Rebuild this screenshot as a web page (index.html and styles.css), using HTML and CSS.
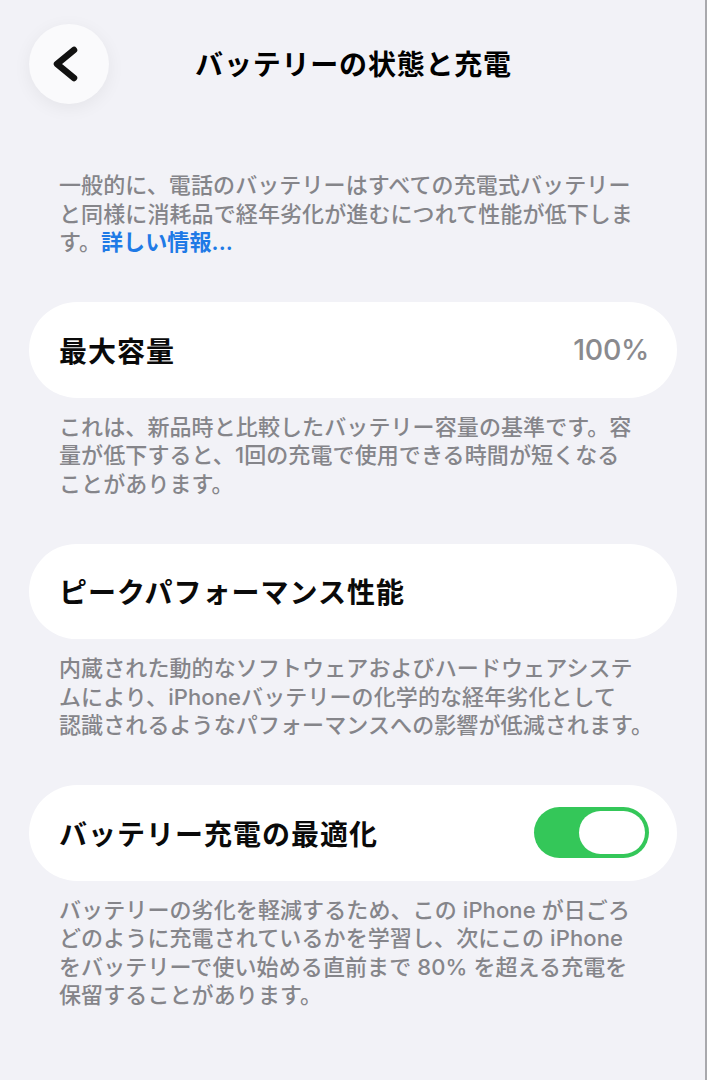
FILE: index.html
```html
<!DOCTYPE html>
<html lang="ja">
<head>
<meta charset="utf-8">
<title>バッテリーの状態と充電</title>
<link rel="stylesheet" href="styles.css">
</head>
<body>
<div class="screen">
  <header class="nav">
    <button class="back" aria-label="戻る">
      <svg viewBox="0 0 80 80" width="80" height="80"><polyline points="45,26 28,40 45,54" fill="none" stroke="#111" stroke-width="6.5" stroke-linecap="round" stroke-linejoin="round"/></svg>
    </button>
    <h1 class="title">バッテリーの状態と充電</h1>
  </header>

  <p class="intro">一般的に、電話のバッテリーはすべての充電式バッテリー<br>と同様に消耗品で経年劣化が進むにつれて性能が低下しま<br>す。<a class="link" href="#">詳しい情報...</a></p>

  <section class="group">
    <div class="card">
      <span class="label">最大容量</span>
      <span class="value">100%</span>
    </div>
    <p class="desc">これは、新品時と比較したバッテリー容量の基準です。容<br>量が低下すると、1回の充電で使用できる時間が短くなる<br>ことがあります。</p>
  </section>

  <section class="group">
    <div class="card">
      <span class="label">ピークパフォーマンス性能</span>
    </div>
    <p class="desc">内蔵された動的なソフトウェアおよびハードウェアシステ<br>ムにより、iPhoneバッテリーの化学的な経年劣化として<br>認識されるようなパフォーマンスへの影響が低減されます。</p>
  </section>

  <section class="group">
    <div class="card">
      <span class="label">バッテリー充電の最適化</span>
      <span class="toggle on"><span class="knob"></span></span>
    </div>
    <p class="desc">バッテリーの劣化を軽減するため、この iPhone が日ごろ<br>どのように充電されているかを学習し、次にこの iPhone<br>をバッテリーで使い始める直前まで 80% を超える充電を<br>保留することがあります。</p>
  </section>
</div>
</body>
</html>
```

FILE: styles.css
```css
html, body {
  margin: 0;
  padding: 0;
  background: #f2f2f7;
}
body {
  font-family: "Inter", "Noto Sans CJK JP", "Noto Sans", sans-serif;
  color: #000;
  min-height: 1080px;
  box-shadow: inset -2px 0 0 #a9a9ad;
}
.screen {
  display: flex;
  flex-direction: column;
}
.nav {
  position: relative;
  height: 104px;
  display: flex;
  align-items: flex-end;
}
.back {
  margin: 0 0 0 29px;
  width: 80px;
  height: 80px;
  border: none;
  border-radius: 50%;
  padding: 0;
  background: #fafafc;
  box-shadow: 0 4px 18px rgba(0,0,0,0.06);
  display: flex;
  align-items: center;
  justify-content: center;
}
.back svg { display: block; }
.title {
  position: absolute;
  left: 0;
  right: 0;
  top: 43px;
  margin: 0;
  text-align: center;
  font-family: "Noto Sans CJK JP", sans-serif;
  font-size: 28px;
  line-height: 40px;
  font-weight: 700;
  letter-spacing: 0.8px;
}
.intro, .desc {
  font-family: "Inter", "Noto Sans CJK JP", sans-serif;
  font-size: 22px;
  line-height: 28.5px;
  color: #85858a;
  white-space: nowrap;
  margin: 0;
  padding: 0 0 0 59px;
  font-weight: 500;
  letter-spacing: 0.1px;
}
.intro {
  margin-top: 67px;
}
.link {
  color: #1f7ae6;
  text-decoration: none;
  font-weight: 600;
}
.group {
  margin-top: 45.5px;
  display: flex;
  flex-direction: column;
}
.card {
  margin: 0 30px 0 29px;
  height: 95.5px;
  background: #fff;
  border-radius: 48px;
  display: flex;
  align-items: center;
  justify-content: space-between;
  padding: 0 28px 0 30px;
}
.label {
  font-family: "Noto Sans CJK JP", sans-serif;
  font-size: 28px;
  font-weight: 700;
  letter-spacing: 1px;
  color: #0a0a0a;
}
.value {
  font-family: "Inter", sans-serif;
  font-size: 28.5px;
  font-weight: 500;
  letter-spacing: -0.3px;
  color: #8a8a8e;
}
.desc {
  margin-top: 15px;
}
.toggle {
  position: relative;
  width: 115px;
  height: 51px;
  border-radius: 26px;
  background: #34c759;
}
.knob {
  position: absolute;
  right: 4px;
  top: 4px;
  width: 66px;
  height: 43px;
  border-radius: 22px;
  background: #fff;
}
```
